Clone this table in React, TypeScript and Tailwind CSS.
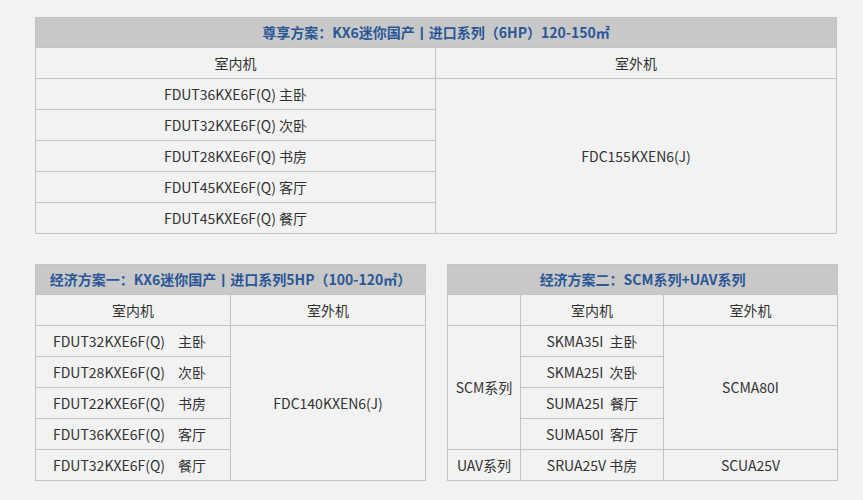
import React from 'react';

const font = { fontFamily: '"Noto Sans CJK SC", "Noto Sans", sans-serif' };

const cell = 'border border-[#c3c3c3] text-center align-middle h-[31px] p-0';
const head = 'border border-[#c3c3c3] bg-[#c8c8c8] text-center align-middle h-[30px] p-0 font-bold text-[#2b5797]';

export default function App() {
  const premium = [
    'FDUT36KXE6F(Q) 主卧',
    'FDUT32KXE6F(Q) 次卧',
    'FDUT28KXE6F(Q) 书房',
    'FDUT45KXE6F(Q) 客厅',
    'FDUT45KXE6F(Q) 餐厅',
  ];
  const eco1 = [
    ['FDUT32KXE6F(Q)', '主卧'],
    ['FDUT28KXE6F(Q)', '次卧'],
    ['FDUT22KXE6F(Q)', '书房'],
    ['FDUT36KXE6F(Q)', '客厅'],
    ['FDUT32KXE6F(Q)', '餐厅'],
  ];
  const scm = ['SKMA35I  主卧', 'SKMA25I  次卧', 'SUMA25I  餐厅', 'SUMA50I  客厅'];

  return (
    <div className="w-[863px] h-[500px] bg-[#f2f2f2] pt-[17px] pl-[35px] text-[14px] text-[#333]" style={font}>
      {/* 尊享方案 */}
      <table className="w-[801px] table-fixed border-collapse">
        <colgroup>
          <col className="w-[400px]" />
          <col className="w-[401px]" />
        </colgroup>
        <tbody>
          <tr>
            <td colSpan={2} className={head}>尊享方案：KX6迷你国产丨进口系列（6HP）120-150㎡</td>
          </tr>
          <tr>
            <td className={cell}>室内机</td>
            <td className={cell}>室外机</td>
          </tr>
          {premium.map((p, i) => (
            <tr key={p}>
              <td className={cell}>{p}</td>
              {i === 0 && (
                <td rowSpan={5} className={cell}>FDC155KXEN6(J)</td>
              )}
            </tr>
          ))}
        </tbody>
      </table>

      <div className="flex gap-[21px] mt-[30px]">
        {/* 经济方案一 */}
        <table className="w-[390px] table-fixed border-collapse">
          <colgroup>
            <col className="w-[195px]" />
            <col className="w-[195px]" />
          </colgroup>
          <tbody>
            <tr>
              <td colSpan={2} className={head}>经济方案一：KX6迷你国产丨进口系列5HP（100-120㎡）</td>
            </tr>
            <tr>
              <td className={cell}>室内机</td>
              <td className={cell}>室外机</td>
            </tr>
            {eco1.map(([m, r], i) => (
              <tr key={i}>
                <td className={cell + ' text-left pl-[17px]'}>
                  <span className="inline-block w-[125px]">{m}</span>
                  <span>{r}</span>
                </td>
                {i === 0 && (
                  <td rowSpan={5} className={cell}>FDC140KXEN6(J)</td>
                )}
              </tr>
            ))}
          </tbody>
        </table>

        {/* 经济方案二 */}
        <table className="w-[390px] table-fixed border-collapse">
          <colgroup>
            <col className="w-[73px]" />
            <col className="w-[143px]" />
            <col className="w-[174px]" />
          </colgroup>
          <tbody>
            <tr>
              <td colSpan={3} className={head}>经济方案二：SCM系列+UAV系列</td>
            </tr>
            <tr>
              <td className={cell}></td>
              <td className={cell}>室内机</td>
              <td className={cell}>室外机</td>
            </tr>
            {scm.map((s, i) => (
              <tr key={s}>
                {i === 0 && (
                  <td rowSpan={4} className={cell}>SCM系列</td>
                )}
                <td className={cell + ' whitespace-pre'}>{s}</td>
                {i === 0 && (
                  <td rowSpan={4} className={cell}>SCMA80I</td>
                )}
              </tr>
            ))}
            <tr>
              <td className={cell}>UAV系列</td>
              <td className={cell}>SRUA25V 书房</td>
              <td className={cell}>SCUA25V</td>
            </tr>
          </tbody>
        </table>
      </div>
    </div>
  );
}
